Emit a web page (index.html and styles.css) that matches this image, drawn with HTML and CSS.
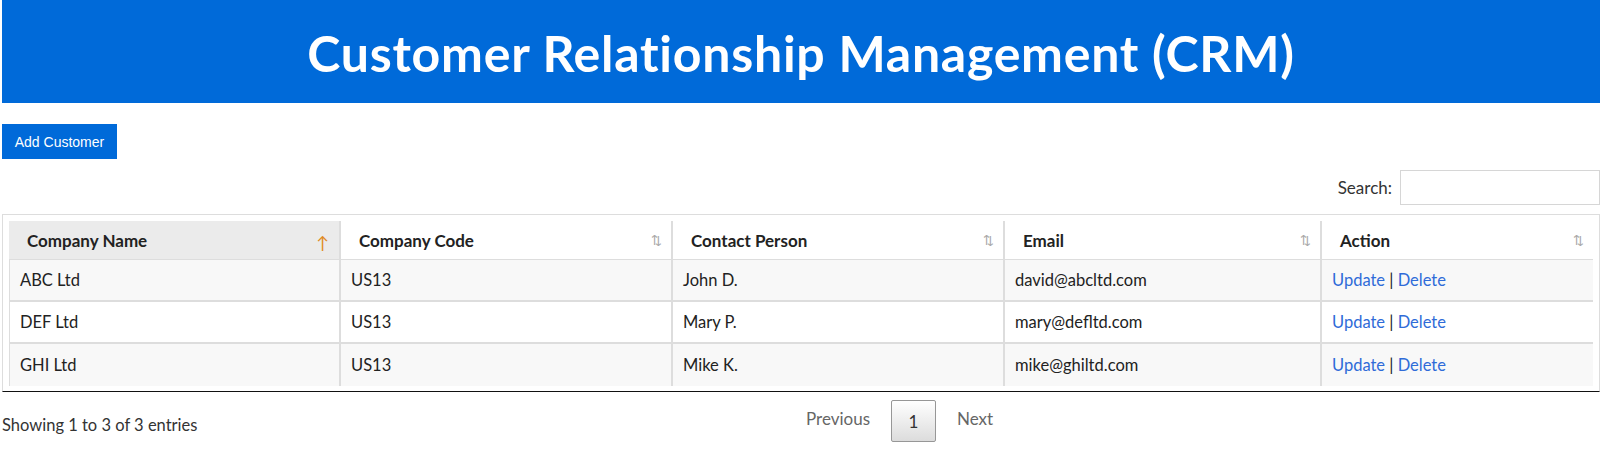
FILE: index.html
```html
<!DOCTYPE html>
<html lang="en">
<head>
<meta charset="utf-8">
<title>CRM</title>
<link rel="stylesheet" href="styles.css">
</head>
<body>
<header class="topbar">
  <h1 class="title">Customer Relationship Management (CRM)</h1>
</header>
<div class="toolbar">
  <button class="add-btn" type="button">Add Customer</button>
</div>
<div class="search-row">
  <label class="search-label" for="q">Search:</label>
  <input class="search-input" id="q" type="search">
</div>
<div class="table-wrap">
  <table class="data">
    <colgroup>
      <col class="w1"><col class="w2"><col class="w3"><col class="w4"><col class="w5">
    </colgroup>
    <thead>
      <tr>
        <th class="sorted">Company Name<span class="sort-asc">↑</span></th>
        <th>Company Code<span class="sort-both">⇅</span></th>
        <th>Contact Person<span class="sort-both">⇅</span></th>
        <th>Email<span class="sort-both">⇅</span></th>
        <th>Action<span class="sort-both">⇅</span></th>
      </tr>
    </thead>
    <tbody>
      <tr class="odd">
        <td>ABC Ltd</td><td>US13</td><td>John D.</td><td>david@abcltd.com</td>
        <td><a href="#">Update</a> | <a href="#">Delete</a></td>
      </tr>
      <tr class="even">
        <td>DEF Ltd</td><td>US13</td><td>Mary P.</td><td>mary@defltd.com</td>
        <td><a href="#">Update</a> | <a href="#">Delete</a></td>
      </tr>
      <tr class="odd last">
        <td>GHI Ltd</td><td>US13</td><td>Mike K.</td><td>mike@ghiltd.com</td>
        <td><a href="#">Update</a> | <a href="#">Delete</a></td>
      </tr>
    </tbody>
  </table>
</div>
<div class="footer">
  <div class="info">Showing 1 to 3 of 3 entries</div>
  <div class="paginate">
    <span class="pg disabled">Previous</span>
    <span class="pg current">1</span>
    <span class="pg disabled">Next</span>
  </div>
</div>
</body>
</html>
```

FILE: styles.css
```css
* { box-sizing: border-box; }
html, body { margin: 0; padding: 0; }
body {
  padding: 0 2px;
  font-family: "Lato", "Noto Sans", sans-serif;
  color: #222;
  background: #fff;
  font-size: 16px;
}
.topbar {
  background: #006ad9;
  height: 103px;
  display: flex;
  align-items: center;
  justify-content: center;
}
.title {
  margin: 0;
  color: #fff;
  font-size: 50px;
  font-weight: 700;
  letter-spacing: 0.75px;
  line-height: 1;
  padding-top: 3px;
}
.toolbar { margin-top: 21px; }
.add-btn {
  display: block;
  width: 115px;
  height: 35px;
  border: none;
  background: #006ad9;
  color: #fff;
  font-family: "Liberation Sans", Arial, sans-serif;
  font-size: 14px;
  padding: 0;
  cursor: pointer;
}
.search-row {
  display: flex;
  justify-content: flex-end;
  align-items: center;
  gap: 8px;
  margin-top: 11px;
}
.search-label { font-size: 17px; color: #333; }
.search-input {
  width: 200px;
  height: 35px;
  border: 1px solid #d6d6d6;
  margin: 0;
  padding: 4px;
  font: inherit;
}
.table-wrap {
  margin-top: 9px;
  border: 1px solid #dddddd;
  border-bottom: 1px solid #111;
  padding: 6px 6px 5px 6px;
}
.data {
  width: 100%;
  border-collapse: separate;
  border-spacing: 0;
  table-layout: fixed;
}
.w1 { width: 330px; }
.w2 { width: 332px; }
.w3 { width: 332px; }
.w4 { width: 317px; }
.w5 { width: 273px; }
.data th {
  position: relative;
  text-align: left;
  font-weight: 700;
  font-size: 17px;
  color: #222;
  padding: 0 18px;
  height: 39px;
  border-bottom: 1px solid #dddddd;
  border-left: 2px solid #dddddd;
  background: #fff;
}
.data th:first-child { border-left: none; }
.data th.sorted { background: #ebebeb; }
.sort-both, .sort-asc {
  position: absolute;
  top: 50%;
  transform: translateY(-50%);
  font-weight: 400;
  line-height: 1;
}
.sort-both {
  right: 9px;
  font-size: 13px;
  color: #a8a8a8;
}
.sort-asc {
  right: 10px;
  font-size: 17px;
  color: #e08a1e;
  margin-top: 2px;
}
.data td {
  padding: 0 10px;
  height: 42px;
  font-size: 16.5px;
  color: #222;
  border-left: 2px solid #dddddd;
  border-bottom: 2px solid #dddddd;
}
.data td:first-child { border-left: 1px solid #dddddd; }
.data tr.last td { border-bottom: none; }
.data tr.odd td { background: #f8f8f8; }
.data tr.even td { background: #fff; }
.data a { color: #2f6bd8; text-decoration: none; }
.footer {
  display: flex;
  align-items: flex-start;
}
.info {
  flex: 0 0 787px;
  padding-top: 23px;
  font-size: 16.5px;
  color: #333;
}
.paginate {
  display: flex;
  align-items: center;
  gap: 4px;
  padding-top: 8px;
}
.pg {
  display: inline-flex;
  align-items: center;
  justify-content: center;
  padding: 0 16px;
  height: 42px;
  font-size: 17px;
  color: #666;
  border: 1px solid transparent;
  border-radius: 2px;
}
.pg.disabled { padding-bottom: 6px; }
.pg.current {
  width: 45px;
  padding: 0;
  color: #333;
  border: 1px solid #979797;
  background: linear-gradient(to bottom, #ffffff 0%, #dcdcdc 100%);
}
```
